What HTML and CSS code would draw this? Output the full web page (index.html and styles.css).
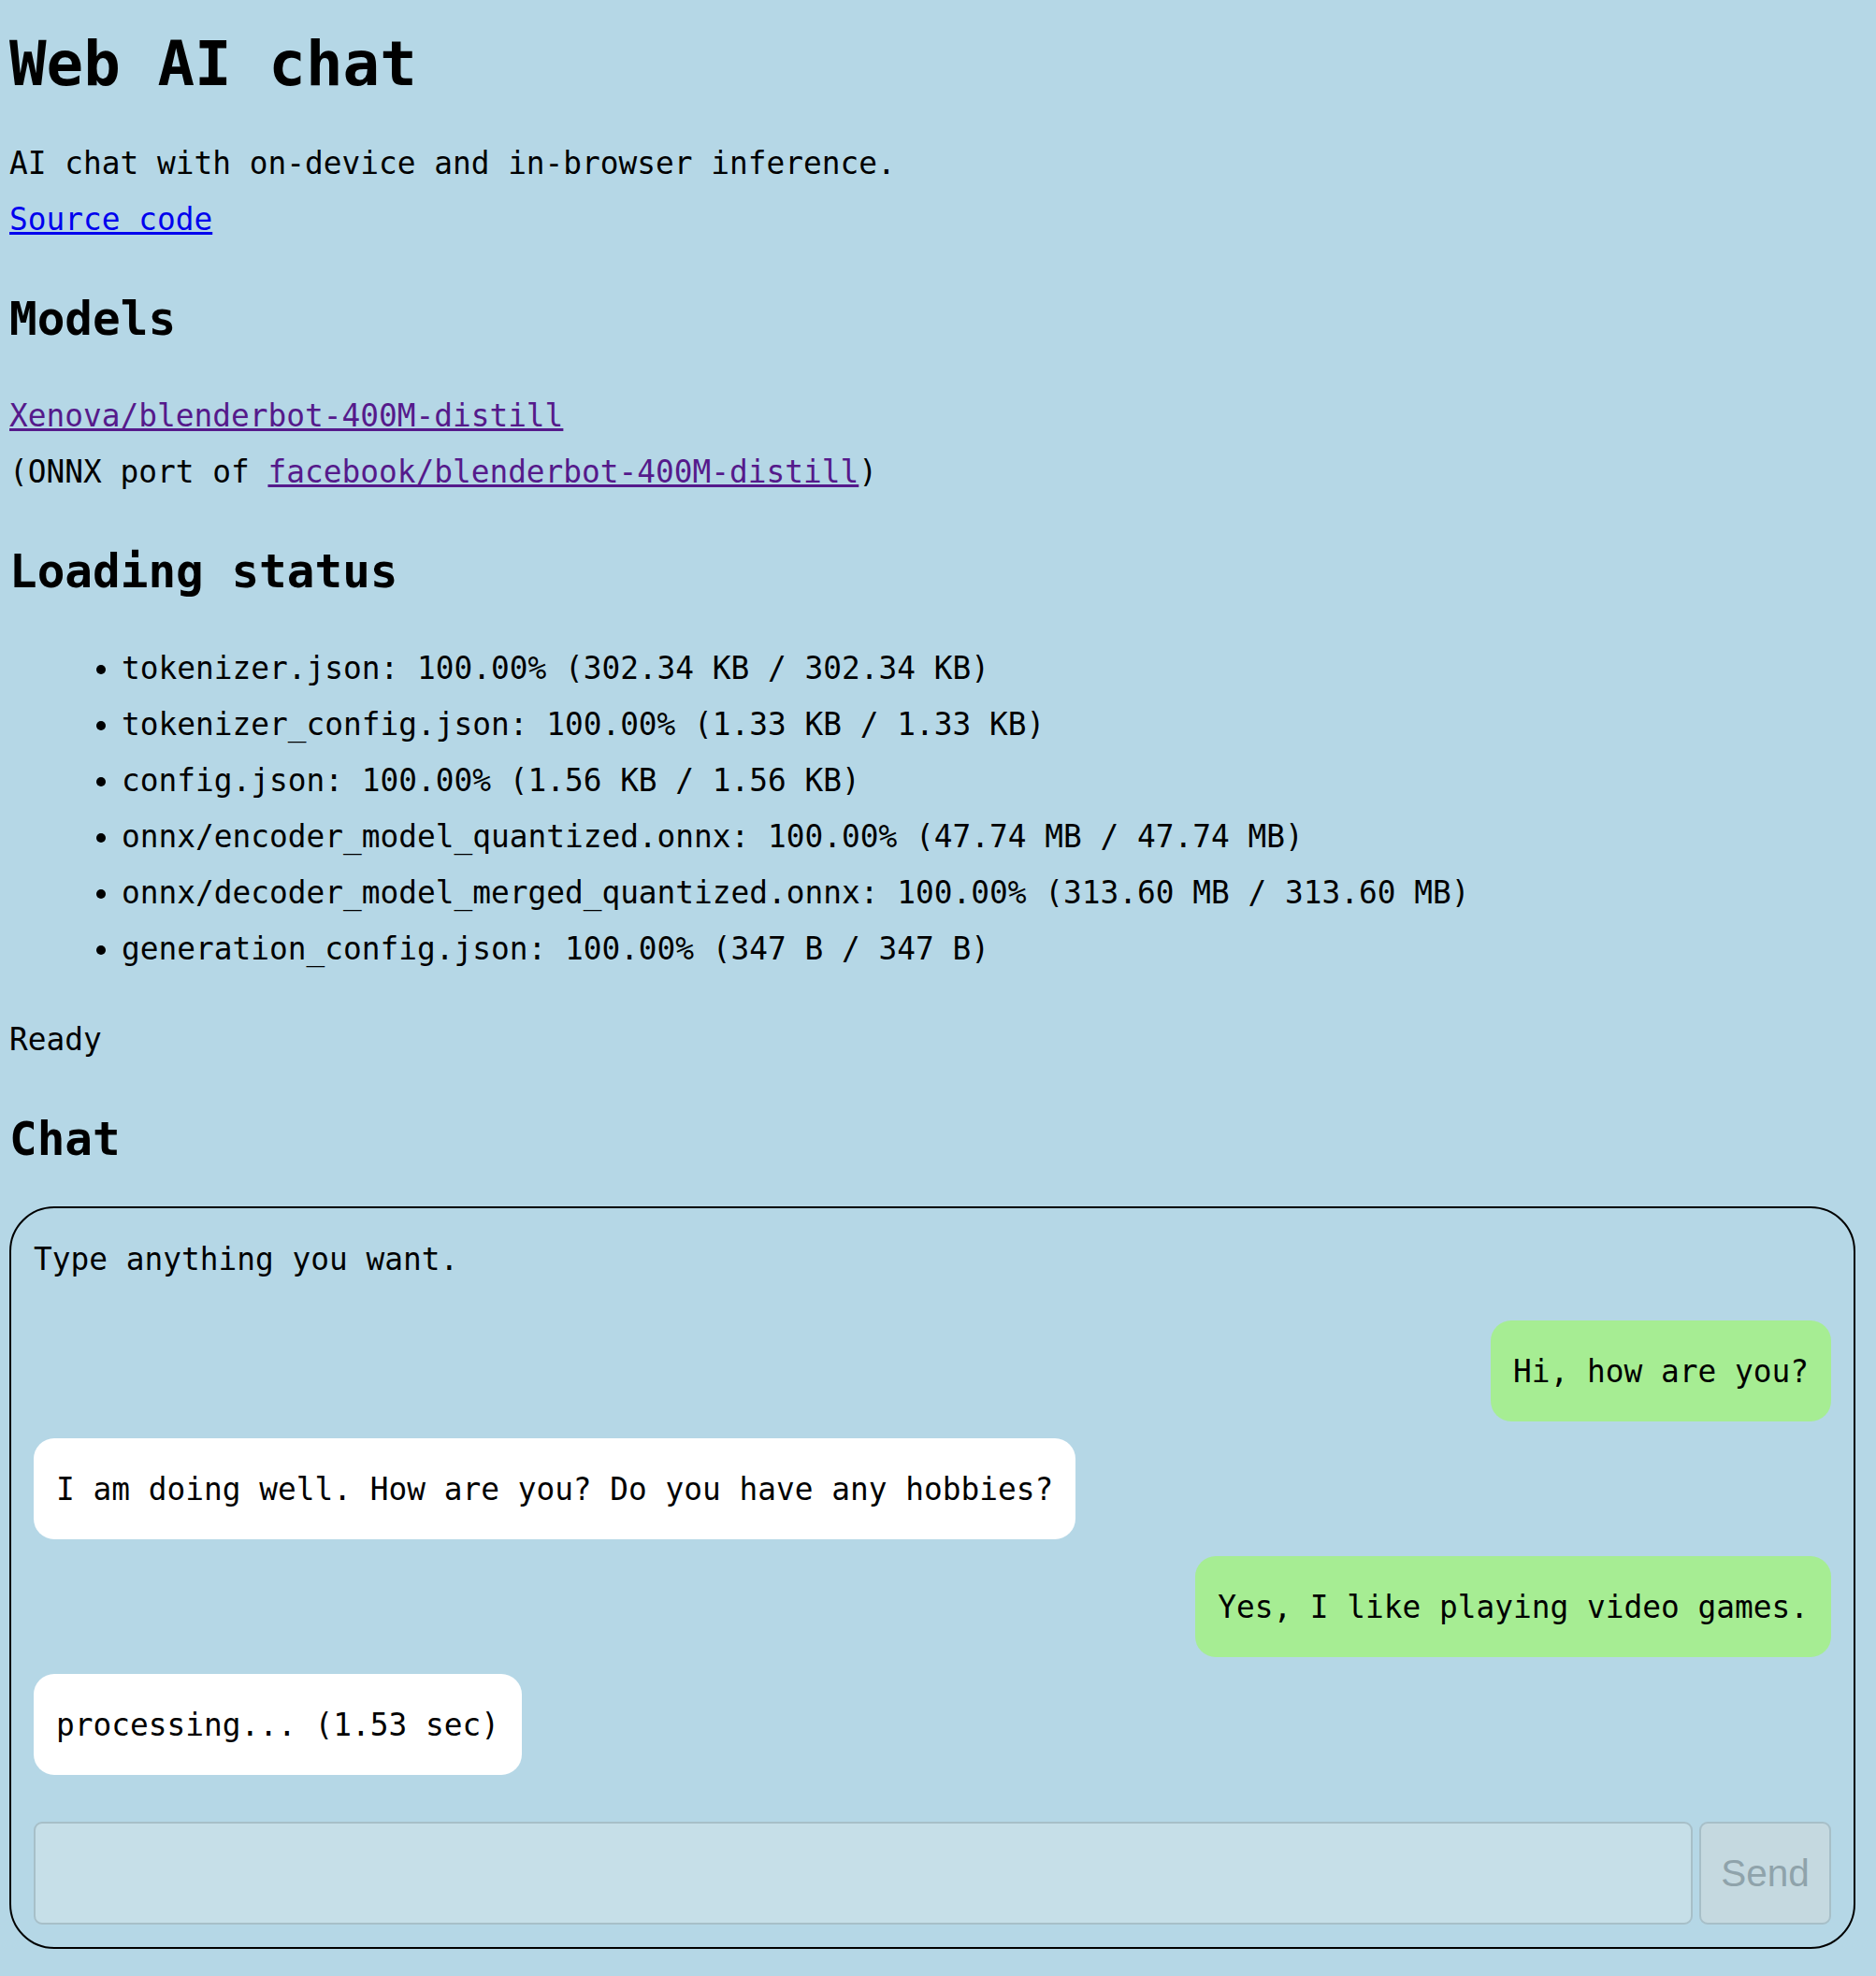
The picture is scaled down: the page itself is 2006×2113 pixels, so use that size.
FILE: index.html
```html
<!DOCTYPE html>
<html lang="en">
<head>
<meta charset="utf-8">
<title>Web AI chat</title>
<link rel="stylesheet" href="styles.css">
</head>
<body>
<h1 class="title">Web AI chat</h1>
<p class="text">AI chat with on-device and in-browser inference.<br><a class="link" href="#">Source code</a></p>

<h2 class="section">Models</h2>
<p class="text"><a class="link visited" href="#">Xenova/blenderbot-400M-distill</a><br>(ONNX port of <a class="link visited" href="#">facebook/blenderbot-400M-distill</a>)</p>

<h2 class="section">Loading status</h2>
<ul class="status-list">
  <li>tokenizer.json: 100.00% (302.34 KB / 302.34 KB)</li>
  <li>tokenizer_config.json: 100.00% (1.33 KB / 1.33 KB)</li>
  <li>config.json: 100.00% (1.56 KB / 1.56 KB)</li>
  <li>onnx/encoder_model_quantized.onnx: 100.00% (47.74 MB / 47.74 MB)</li>
  <li>onnx/decoder_model_merged_quantized.onnx: 100.00% (313.60 MB / 313.60 MB)</li>
  <li>generation_config.json: 100.00% (347 B / 347 B)</li>
</ul>
<p class="text ready">Ready</p>

<h2 class="section chat-heading">Chat</h2>
<div class="chat">
  <div class="chat-intro">Type anything you want.</div>
  <div class="messages">
    <div class="bubble user">Hi, how are you?</div>
    <div class="bubble bot">I am doing well. How are you? Do you have any hobbies?</div>
    <div class="bubble user">Yes, I like playing video games.</div>
    <div class="bubble bot">processing... (1.53 sec)</div>
  </div>
  <form class="composer">
    <input class="composer-input" type="text" disabled>
    <button class="composer-send" type="button" disabled>Send</button>
  </form>
</div>
</body>
</html>
```

FILE: styles.css
```css
html {
  background: #b5d7e6;
}

body {
  margin: 0 22px 0 10px;
  background: #b5d7e6;
  color: #000;
  font-family: "DejaVu Sans Mono", "Liberation Mono", monospace;
  font-size: 32.8px;
  line-height: 60px;
}

.title {
  font-size: 65.8px;
  line-height: 80px;
  font-weight: bold;
  margin: 29px 0 36px;
}

.text {
  margin: 0;
}

.section {
  font-size: 49.3px;
  line-height: 64px;
  font-weight: bold;
  margin: 44px 0 42px;
}

.section.chat-heading {
  margin-bottom: 40px;
}

.link {
  color: #0000ee;
  text-decoration: underline;
}

.link.visited {
  color: #551a8b;
}

.status-list {
  margin: 0;
  padding: 0 0 0 120px;
}

.ready {
  margin-top: 37px;
}

.chat {
  border: 2px solid #000;
  border-radius: 48px;
  padding: 25px 24px 24px;
}

.chat-intro {
  margin-bottom: 35px;
}

.messages {
  display: flex;
  flex-direction: column;
  gap: 18px;
}

.bubble {
  padding: 25px 24px 23px;
  border-radius: 22px;
  white-space: nowrap;
}

.bubble.user {
  align-self: flex-end;
  background: #a6ed93;
}

.bubble.bot {
  align-self: flex-start;
  background: #ffffff;
}

.composer {
  display: flex;
  gap: 7px;
  margin: 50px 0 0;
}

.composer-input {
  flex: 1;
  height: 110px;
  box-sizing: border-box;
  margin: 0;
  background: #c6dfe8;
  border: 2px solid #a7bfc8;
  border-radius: 9px;
  font: inherit;
}

.composer-send {
  width: 141px;
  height: 110px;
  box-sizing: border-box;
  margin: 0;
  padding: 0;
  background: #c5d9e0;
  border: 2px solid #a7bfc8;
  border-radius: 9px;
  color: #8fa3ab;
  font-family: "Liberation Sans", Arial, sans-serif;
  font-size: 40.5px;
}
```
